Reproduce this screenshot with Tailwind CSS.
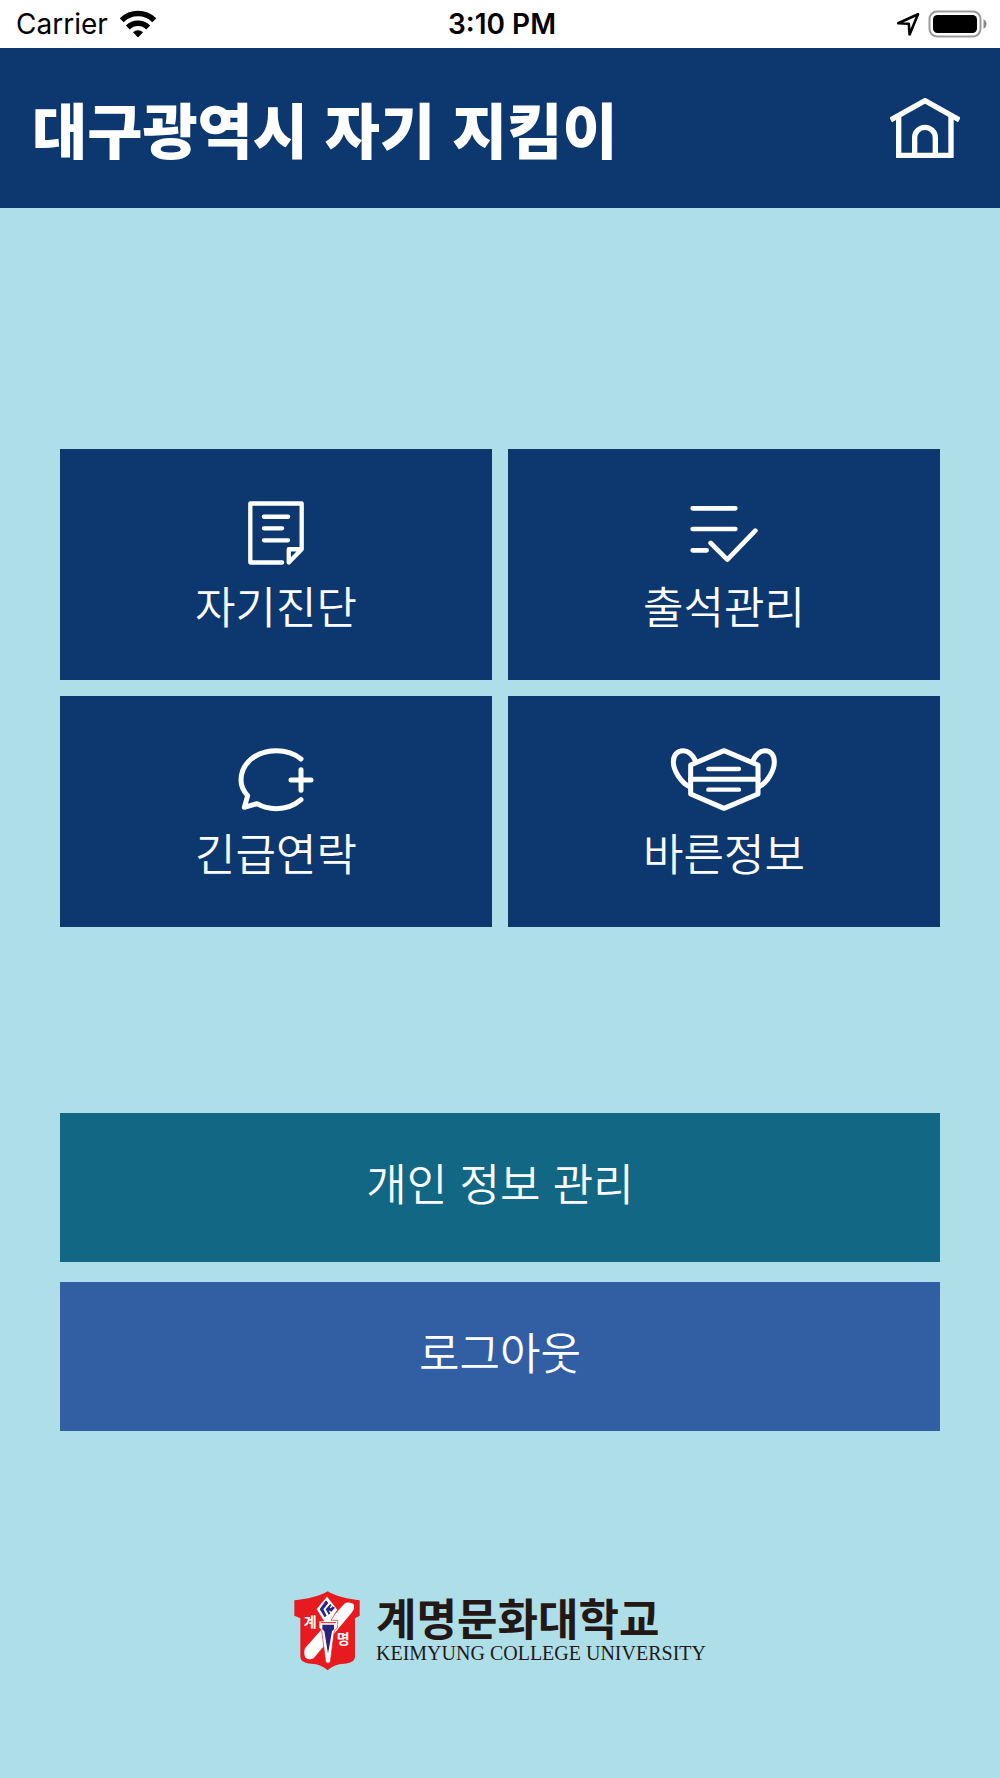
<!DOCTYPE html>
<html lang="ko">
<head>
    <meta charset="UTF-8">
    <meta name="viewport" content="width=device-width, initial-scale=1.0">
    <title>대구광역시 자기 지킴이</title>
    <script src="https://cdn.jsdelivr.net/npm/@tailwindcss/browser@4"></script>
</head>
<body class="min-h-screen flex flex-col bg-[#aedfe9] font-['Noto_Sans_CJK_KR',sans-serif]">
    <!-- status bar -->
    <div class="h-12 shrink-0 grid grid-cols-3 items-center pl-4 pr-3 bg-white text-black text-[28px] leading-8 font-['Inter',sans-serif]">
        <div class="flex items-center gap-3">
            <span>Carrier</span>
            <svg class="w-9 h-7" viewBox="0 0 36 28" fill="none" stroke="#000" stroke-width="5.500">
                <path d="M1.8 10.2a23 23 0 0 1 32.4 0"/>
                <path d="M7.8 17.500a14.5 14.5 0 0 1 20.4 0"/>
                <path d="M18 27.5l-5-5.2a7.2 7.2 0 0 1 10 0z" fill="#000" stroke="none"/>
            </svg>
        </div>
        <span class="text-center font-semibold">3:10 PM</span>
        <div class="flex items-center justify-end gap-2">
            <svg class="w-6 h-6" viewBox="0 0 24 24" fill="none" stroke="#000" stroke-width="2.6" stroke-linejoin="round">
                <path d="M2.2 11.2L22 2.2l-8.4 20.2-.8-10.6z"/>
            </svg>
            <svg class="w-15 h-7" viewBox="0 0 60 28">
                <rect x="1.5" y="1.5" width="51" height="25" rx="7.5" fill="none" stroke="#999" stroke-width="2"/>
                <rect x="5" y="5" width="44" height="18" rx="4.5" fill="#000"/>
                <path d="M55.5 9.2c4 2 4 7.6 0 9.6z" fill="#888"/>
            </svg>
        </div>
    </div>

    <header class="flex items-center justify-between pl-8 pr-10 py-9 bg-[#0d386f] text-white">
        <h1 class="text-[60px] leading-[88px] font-black">대구광역시 자기 지킴이</h1>
        <a href="#" aria-label="홈">
            <svg class="w-[70px] h-[60px]" viewBox="90 297 210 180" fill="none" stroke="currentColor" stroke-width="16">
                <path d="M92 363L195 305l103 58"/>
                <path d="M116 352v117h157V352"/>
                <path d="M164 466v-50a31 31 0 0 1 62 0v50"/>
            </svg>
        </a>
    </header>

    <main class="flex-1 flex flex-col px-15 pt-[241px] pb-[107px]">
        <nav class="grid grid-cols-2 gap-4 text-white text-[44px] leading-12 font-[350]">
            <a href="#" class="flex flex-col items-center gap-4 pt-[52px] pb-[51px] bg-[#0d386f]">
                <svg class="w-14 h-16" viewBox="619 183 169 192" fill="none" stroke="currentColor" stroke-width="13" stroke-linecap="round" stroke-linejoin="round">
                    <path d="M722 368H626V190H781V328L742 368V328H781"/>
                    <path d="M667 230H740M667 265H722M667 301H740"/>
                </svg>
                자기진단
            </a>
            <a href="#" class="flex flex-col items-center gap-4 pt-[52px] pb-[51px] bg-[#0d386f]">
                <svg class="w-17 h-16" viewBox="602 183 204 192" fill="none" stroke="currentColor" stroke-width="14" stroke-linecap="round" stroke-linejoin="round">
                    <path d="M610 205H738M610 267H738M610 331H652"/>
                    <path d="M664 309L714 359L798 272"/>
                </svg>
                출석관리
            </a>
            <a href="#" class="flex flex-col items-center gap-4 pt-[52px] pb-[51px] bg-[#0d386f]">
                <svg class="w-19 h-16" viewBox="593 174 228 192" fill="none" stroke="currentColor" stroke-width="15" stroke-linecap="round" stroke-linejoin="round">
                    <path d="M782 207C762 190 736 182 708 182C647 182 602 221 602 270C602 288 610 304 622 317L612 352L650 341C667 351 687 356 708 356C738 356 763 346 782 329"/>
                    <path d="M752 270H812M782 239V301"/>
                </svg>
                긴급연락
            </a>
            <a href="#" class="flex flex-col items-center gap-4 pt-[52px] pb-[51px] bg-[#0d386f]">
                <svg class="w-27 h-16" viewBox="541 174 324 192" fill="none" stroke="currentColor" stroke-width="15" stroke-linecap="round" stroke-linejoin="round">
                    <path d="M703 182L805 225V312L703 355L603 312V225Z"/>
                    <path d="M603 268H805"/>
                    <path d="M656 237H748M656 299H748" stroke-width="13"/>
                    <path d="M617 212C608 193 597 182 581 182C562 182 551 197 551 216C551 241 574 279 601 291"/>
                    <path d="M790 212C799 193 810 182 826 182C845 182 854 197 854 216C854 241 833 279 806 291"/>
                </svg>
                바른정보
            </a>
        </nav>

        <div class="mt-[186px] flex flex-col gap-5 text-white text-[44px] leading-12 font-[350]">
            <button type="button" class="w-full pt-[45px] pb-14 bg-[#116784] cursor-pointer">개인 정보 관리</button>
            <button type="button" class="w-full pt-[45px] pb-14 bg-[#325fa3] cursor-pointer">로그아웃</button>
        </div>

        <footer class="mt-auto flex items-center justify-center gap-4 text-[#231815]">
            <svg class="w-[66px] h-20" viewBox="29 34 198 240">
                <path d="M130 35C147 47 196 60 226 62V108L212 116V232C210 246 198 250 180 252C158 253 142 260 130 272C118 260 102 253 80 252C62 250 50 246 48 232V116L30 108V62C64 60 113 47 130 35Z" fill="#e71a20"/>
                <path d="M62 206L180 72C188 66 202 68 208 74C211 84 208 92 203 98L88 236C78 242 68 238 62 232C59 224 59 214 62 206Z" fill="#fff"/>
                <path d="M128 50L96 88L118 124H104V144L112 152L124 246Q131 256 138 246L150 152L160 144V122H140L160 90Z" fill="#fff" stroke="#e71a20" stroke-width="2"/>
                <path d="M125 62L106 89L121 113L127 108L117 89L132 70ZM138 73L124 89L133 105L138 101L133 92L141 96L152 84L144 80L140 86L136 84L142 77Z" fill="#28247f"/>
                <path d="M109 129H155" stroke="#e71a20" stroke-width="3"/>
                <path d="M114 135H149V149L143 155L131 222L120 155L114 149Z" fill="#28247f"/>
                <text x="58" y="142" font-size="42" font-weight="700" fill="#fff">계</text>
                <text x="157" y="194" font-size="42" font-weight="700" fill="#fff">명</text>
            </svg>
            <div class="pb-1">
                <p class="text-[44px] leading-12 font-bold">계명문화대학교</p>
                <p class="text-xl leading-6 font-['Liberation_Serif',serif]">KEIMYUNG COLLEGE UNIVERSITY</p>
            </div>
        </footer>
    </main>
</body>
</html>
